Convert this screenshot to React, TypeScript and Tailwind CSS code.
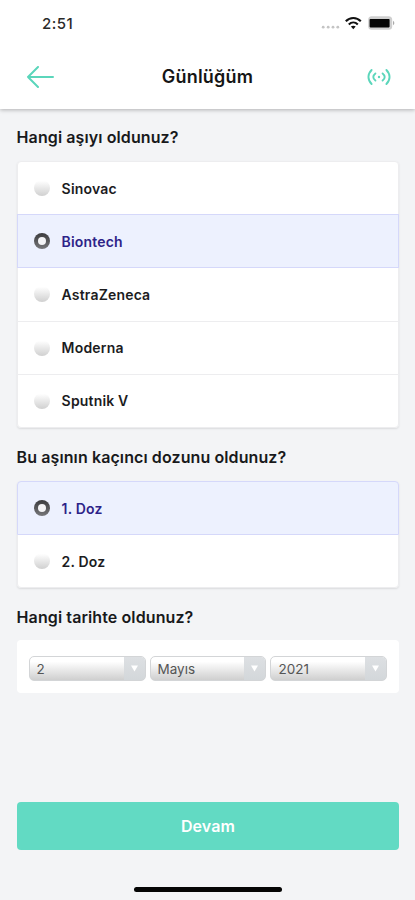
import { useState } from 'react';

const vaccines = ['Sinovac', 'Biontech', 'AstraZeneca', 'Moderna', 'Sputnik V'];
const doses = ['1. Doz', '2. Doz'];
const dateFields = ['2', 'Mayıs', '2021'];

const StatusBar = () => (
  <div className="flex h-[46px] items-center justify-between pl-[42px] pr-[20px]">
    <span className="text-[15px] font-medium leading-none tracking-[0.45px] text-[#2a2a2a]">2:51</span>
    <div className="flex items-center">
      <svg width="20" height="14" viewBox="0 0 20 14" className="mr-[4px]" fill="#c4c4c4">
        <circle cx="2.2" cy="11.2" r="1.4" />
        <circle cx="7.2" cy="11.2" r="1.4" />
        <circle cx="12" cy="11.2" r="1.4" />
        <circle cx="16.8" cy="11.2" r="1.4" />
      </svg>
      <svg width="17" height="14" viewBox="0 0 17 14" className="mr-[6px]" fill="none" stroke="#111" strokeWidth="2.1">
        <path d="M0.8 5.2C5 0.9 11.6 0.9 15.8 5.2" />
        <path d="M3.8 8.4C6.4 5.9 10.2 5.9 12.8 8.4" />
        <path d="M5.9 10.5C7.2 9.5 9.4 9.5 10.7 10.5L8.3 13.2Z" fill="#111" stroke="none" />
      </svg>
      <svg width="27" height="14" viewBox="0 0 27 14">
        <rect x="0.2" y="0.3" width="24" height="13.4" rx="3.5" fill="#cfcfcf" />
        <rect x="1.6" y="3" width="20" height="8.4" rx="0.8" fill="#050505" />
        <path d="M25 4.8C26.8 5.6 26.8 8.4 25 9.2Z" fill="#aaa" />
      </svg>
    </div>
  </div>
);

const Header = () => (
  <header className="relative h-[109px] bg-white shadow-[0_1px_4px_rgba(0,0,0,0.28)]">
    <StatusBar />
    <div className="flex h-[62px] items-center justify-between pl-[26px] pr-[24px]">
      <svg width="28" height="22" viewBox="0 0 28 22" fill="none" stroke="#5bd6bb" strokeWidth="2" strokeLinecap="round" strokeLinejoin="round">
        <path d="M12 1L2 11L12 21M2 11H27" />
      </svg>
      <h1 className="mr-[6px] text-[18px] font-semibold leading-none tracking-[0.2px] text-[#151515]">Günlüğüm</h1>
      <svg width="24" height="18" viewBox="0 0 24 18" fill="none" stroke="#5bd6bb" strokeWidth="1.9" strokeLinecap="round">
        <path d="M4.6 2C0.4 6.2 0.4 11.8 4.6 16M19.4 2C23.6 6.2 23.6 11.8 19.4 16" />
        <path d="M8.4 5.4C5.6 7.6 5.6 10.4 8.4 12.6M15.6 5.4C18.4 7.6 18.4 10.4 15.6 12.6" />
        <circle cx="12" cy="9" r="1.2" fill="#5bd6bb" stroke="none" />
      </svg>
    </div>
  </header>
);

const Radio = ({ checked }: { checked: boolean }) =>
  checked ? (
    <span className="flex h-4 w-4 items-center justify-center rounded-full bg-linear-to-b from-[#3c3c3e] to-[#77777a]">
      <span className="h-2 w-2 rounded-full bg-[#f4f4f6]" />
    </span>
  ) : (
    <span className="h-4 w-4 rounded-full bg-linear-to-b from-white from-5% to-[#d0d0d0]" />
  );

type OptionListProps = {
  options: string[];
  value: string;
  onChange: (value: string) => void;
};

const OptionList = ({ options, value, onChange }: OptionListProps) => (
  <div className="flex flex-col rounded-[4px] shadow-[0_1px_2px_rgba(0,0,0,0.1)]">
    {options.map((option) => {
      const active = option === value;
      return (
        <button
          key={option}
          onClick={() => onChange(option)}
          className={`-mb-px flex h-[54.2px] items-center gap-3 border pl-4 text-left text-[14px] font-semibold tracking-[0.18px] first:rounded-t-[4px] last:mb-0 last:rounded-b-[4px] ${
            active
              ? 'relative border-[#d5d8fa] bg-[#edf1fe] text-[#2d2388]'
              : 'border-[#ededef] bg-white text-[#1c1c1e]'
          }`}
        >
          <Radio checked={active} />
          {option}
        </button>
      );
    })}
  </div>
);

const Question = ({ children }: { children: string }) => (
  <h2 className="text-[16px] font-semibold leading-[24px] tracking-[0.1px] text-[#18191b]">{children}</h2>
);

const DateSelect = ({ label }: { label: string }) => (
  <button className="flex h-[25px] flex-1 overflow-hidden rounded-[5px] border border-[#d3d5d7] bg-linear-to-b from-white from-20% to-[#cfcfcf] text-left">
    <span className="flex-1 pl-[7px] text-[13.5px] leading-[24px] text-[#555]">{label}</span>
    <span className="flex w-[21px] items-center justify-center bg-linear-to-b from-[#dde0e3] to-[#d3d7da]">
      <svg width="7" height="7" viewBox="0 0 7 7" fill="#fff">
        <path d="M0 0.5H7L3.5 6.5Z" />
      </svg>
    </span>
  </button>
);

export default function App() {
  const [vaccine, setVaccine] = useState('Biontech');
  const [dose, setDose] = useState('1. Doz');

  return (
    <div className="flex h-[900px] w-[415px] flex-col bg-[#f3f4f6] font-['Inter','Liberation_Sans',sans-serif]">
      <Header />

      <main className="flex flex-1 flex-col pl-[16.6px] pr-[15.6px] pt-4">
        <section className="flex flex-col gap-3">
          <Question>Hangi aşıyı oldunuz?</Question>
          <OptionList options={vaccines} value={vaccine} onChange={setVaccine} />
        </section>

        <section className="mt-[17px] flex flex-col gap-3">
          <Question>Bu aşının kaçıncı dozunu oldunuz?</Question>
          <OptionList options={doses} value={dose} onChange={setDose} />
        </section>

        <section className="mt-[16.4px] flex flex-col gap-[11.6px]">
          <Question>Hangi tarihte oldunuz?</Question>
          <div className="flex h-[53px] items-center gap-1 rounded-[4px] bg-white px-3 pt-1">
            {dateFields.map((field) => (
              <DateSelect key={field} label={field} />
            ))}
          </div>
        </section>
      </main>

      <footer className="flex flex-col items-center pl-[16.6px] pr-[15.6px]">
        <button className="h-12 w-full rounded-[4px] bg-[#62dac3] text-[16px] font-semibold tracking-[0.1px] text-white">
          Devam
        </button>
        <div className="mb-[8px] mt-[37px] h-[5px] w-[148px] rounded-full bg-[#050505]" />
      </footer>
    </div>
  );
}
